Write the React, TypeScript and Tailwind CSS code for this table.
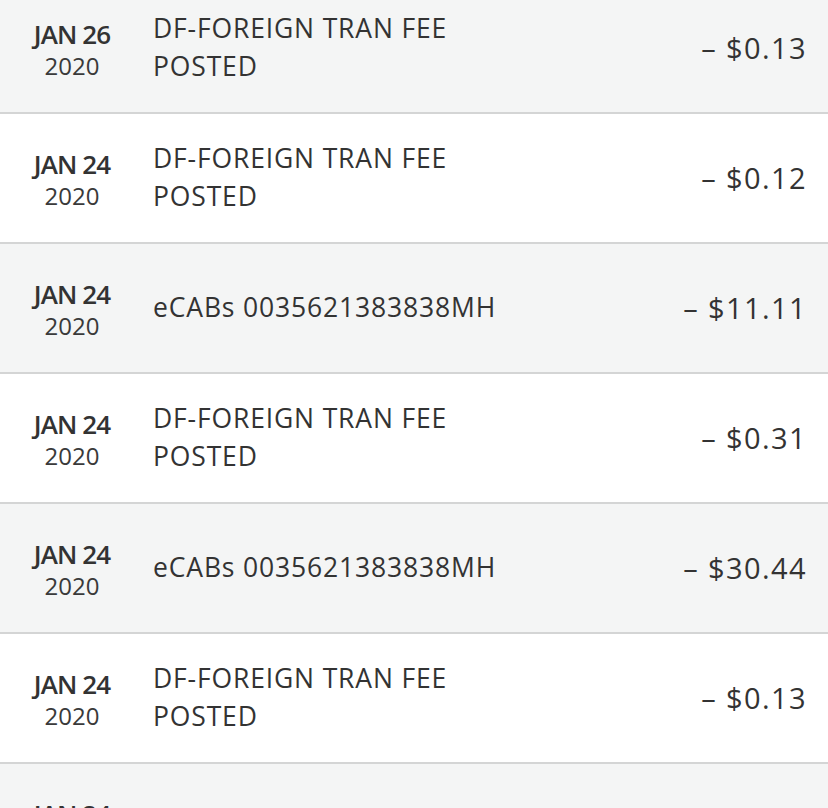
const rows = [
  { month: "JAN 26", year: "2020", lines: ["DF-FOREIGN TRAN FEE", "POSTED"], amount: "– $0.13" },
  { month: "JAN 24", year: "2020", lines: ["DF-FOREIGN TRAN FEE", "POSTED"], amount: "– $0.12" },
  { month: "JAN 24", year: "2020", lines: ["eCABs 0035621383838MH"], amount: "– $11.11" },
  { month: "JAN 24", year: "2020", lines: ["DF-FOREIGN TRAN FEE", "POSTED"], amount: "– $0.31" },
  { month: "JAN 24", year: "2020", lines: ["eCABs 0035621383838MH"], amount: "– $30.44" },
  { month: "JAN 24", year: "2020", lines: ["DF-FOREIGN TRAN FEE", "POSTED"], amount: "– $0.13" },
  { month: "JAN 24", year: "2020", lines: ["eCABs 0035621383838MH"], amount: "– $4.20" },
];

export default function App() {
  return (
    <div
      className="h-[808px] w-[828px] overflow-hidden bg-white text-[#333]"
      style={{ fontFamily: '"Open Sans", "Liberation Sans", sans-serif' }}
    >
      <div className="-mt-[16px]">
        {rows.map((r, i) => (
          <div
            key={i}
            className={`flex h-[130px] items-center border-b-2 border-[#d4d5d5] ${
              i % 2 === 0 ? "bg-[#f4f5f5]" : "bg-white"
            }`}
          >
            <div className="flex w-[144px] shrink-0 flex-col items-center pt-[4px]">
              <span className="text-[26px] font-semibold leading-[31px] tracking-[-0.9px]">{r.month}</span>
              <span className="text-[24px] leading-[31px] text-[#3a3a3a]">{r.year}</span>
            </div>
            <div className="flex flex-1 flex-col pl-[9px] pb-[2px]">
              {r.lines.map((l, j) => (
                <span key={j} className="text-[26.5px] leading-[38px] tracking-[0.85px]">
                  {l}
                </span>
              ))}
            </div>
            <div className="pr-[21px] text-[29px] leading-[38px] tracking-[1.4px]">{r.amount}</div>
          </div>
        ))}
      </div>
    </div>
  );
}
